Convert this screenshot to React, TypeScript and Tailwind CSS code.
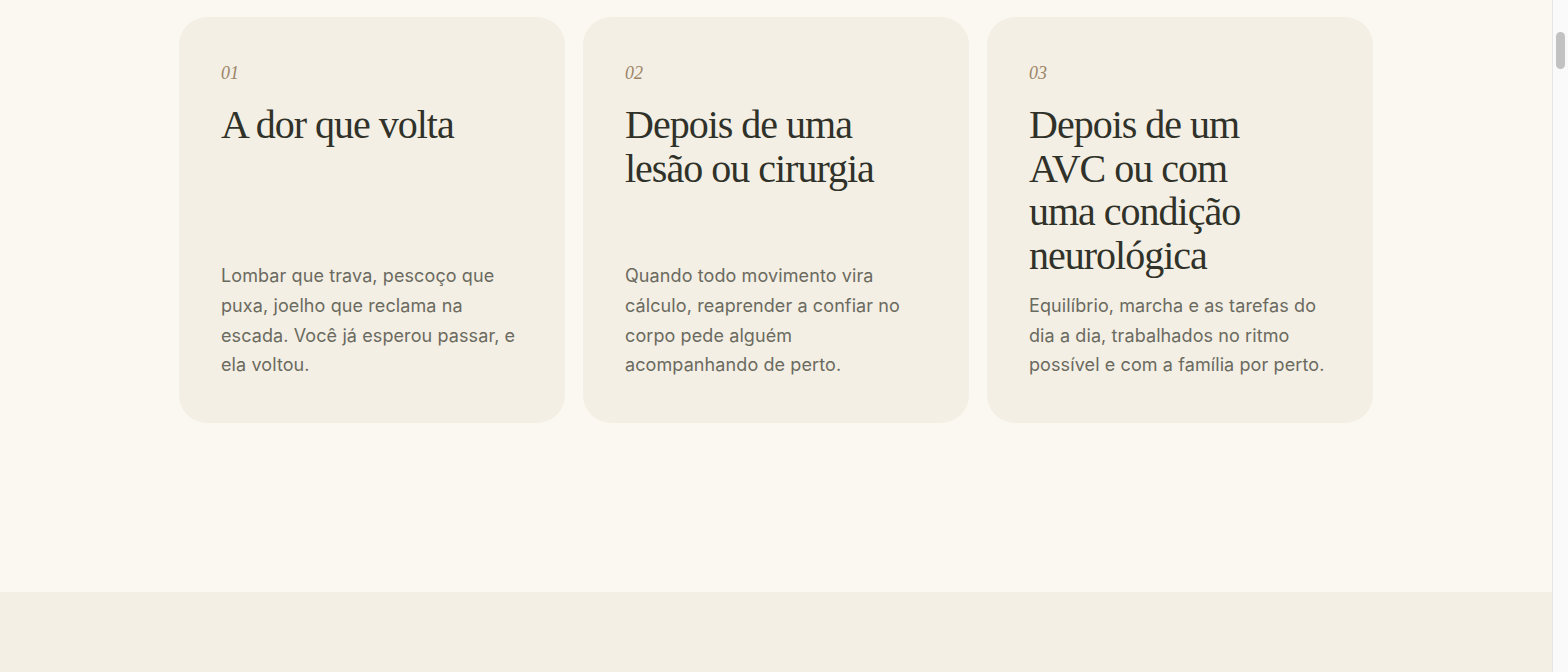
import React from "react";

const cards = [
  {
    n: "01",
    title: ["A dor que volta"],
    body: "Lombar que trava, pescoço que puxa, joelho que reclama na escada. Você já esperou passar, e ela voltou.",
  },
  {
    n: "02",
    title: ["Depois de uma", "lesão ou cirurgia"],
    body: "Quando todo movimento vira cálculo, reaprender a confiar no corpo pede alguém acompanhando de perto.",
  },
  {
    n: "03",
    title: ["Depois de um", "AVC ou com", "uma condição", "neurológica"],
    body: "Equilíbrio, marcha e as tarefas do dia a dia, trabalhados no ritmo possível e com a família por perto.",
  },
];

export default function App() {
  return (
    <div className="h-[672px] flex overflow-hidden bg-[#fbf7f1]">
      <main className="flex-1 flex flex-col">
        <section className="pt-[17px] pb-[169px]">
          <div className="w-[1194px] mx-auto grid grid-cols-3 gap-[18px]">
            {cards.map((c) => (
              <div
                key={c.n}
                className="bg-[#f3efe4] rounded-[28px] h-[406px] pt-[42px] pb-[43px] px-[42px] flex flex-col"
              >
                <div
                  className="text-[18px] leading-[28px] italic text-[#9b8468]"
                  style={{ fontFamily: '"Liberation Serif", serif' }}
                >
                  {c.n}
                </div>
                <h3
                  className="mt-[16px] text-[40px] leading-[43.5px] font-normal text-[#30322a] tracking-[-1px]"
                  style={{ fontFamily: '"Liberation Serif", serif' }}
                >
                  {c.title.map((t, i) => (
                    <div key={i}>{t}</div>
                  ))}
                </h3>
                <p
                  className="mt-auto pt-[12px] text-[18px] leading-[29.7px] text-[#6b6a5f] tracking-[0.1px]"
                  style={{ fontFamily: 'Inter, "Noto Sans", sans-serif' }}
                >
                  {c.body}
                </p>
              </div>
            ))}
          </div>
        </section>
        <section className="bg-[#f3efe5] flex-1" />
      </main>
      <aside className="w-[16px] shrink-0 bg-[#fafafa] border-l border-[#e6e6e6] pt-[32px] flex justify-center">
        <div className="w-[9px] h-[37px] rounded-full bg-[#c2c2c2]" />
      </aside>
    </div>
  );
}
